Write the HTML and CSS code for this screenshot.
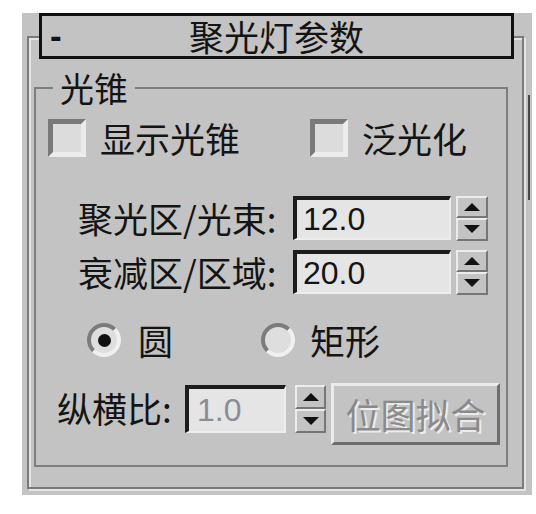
FILE: index.html
```html
<!DOCTYPE html>
<html lang="zh-CN">
<head>
  <meta charset="UTF-8" />
  <title>聚光灯参数</title>
  <link rel="stylesheet" href="styles.css">
</head>
<body>
  <div class="panel">
    <div class="rollout">
      <div class="rollout-title">
        <span class="toggle">-</span>
        <span class="title-text">聚光灯参数</span>
        <span></span>
      </div>

      <div class="group">
        <div class="legend">光锥</div>

        <div class="check-row">
          <label class="check"><span class="box"></span>显示光锥</label>
          <label class="check check-2"><span class="box"></span>泛光化</label>
        </div>

        <div class="spin-row first">
          <span class="spin-label">聚光区/光束:</span>
          <div class="field">12.0</div>
          <div class="spin-btns"><span class="up"></span><span class="down"></span></div>
        </div>
        <div class="spin-row">
          <span class="spin-label">衰减区/区域:</span>
          <div class="field">20.0</div>
          <div class="spin-btns"><span class="up"></span><span class="down"></span></div>
        </div>

        <div class="radio-row">
          <label class="radio"><span class="ring checked"></span>圆</label>
          <label class="radio radio-2"><span class="ring"></span>矩形</label>
        </div>

        <div class="aspect-row">
          <span class="aspect-label">纵横比:</span>
          <div class="field disabled">1.0</div>
          <div class="spin-btns"><span class="up"></span><span class="down"></span></div>
          <button class="fit-btn" disabled>位图拟合</button>
        </div>
      </div>
    </div>

    <div class="scroll-track"><div class="thumb"></div></div>
  </div>
</body>
</html>
```

FILE: styles.css
```css
body {
  margin: 0;
  background: #fff;
  font-family: "Noto Sans CJK SC", "Liberation Sans", sans-serif;
  color: #141414;
}

.panel {
  display: flex;
  width: 510px;
  height: 482px;
  margin: 13px 0 0 22px;
  padding: 23px 0 0 5px;
  box-sizing: border-box;
  background: #c3c3c3;
}

.rollout {
  width: 497px;
  align-self: flex-start;
  box-sizing: border-box;
  border: 2px solid #7b7b7b;
  box-shadow: inset 2px 2px 0 #e4e4e4, 2px 2px 0 #e4e4e4;
}

.rollout-title {
  display: grid;
  grid-template-columns: 40px 1fr 40px;
  align-items: center;
  height: 46px;
  margin: -25px 8px 0 10px;
  box-sizing: border-box;
  border: 3px solid #111;
  background: #c3c3c3;
  font-size: 35px;
  line-height: 40px;
}

.toggle {
  padding-left: 8px;
  font-family: "Liberation Sans", sans-serif;
  font-weight: bold;
}

.title-text {
  text-align: center;
}

.scroll-track {
  width: 8px;
}

.thumb {
  width: 2px;
  height: 105px;
  margin: 59px 0 0 4px;
  background: #4a4a4a;
}

/* group box */
.group {
  margin: 28px 14px 20px 5px;
  padding-bottom: 20px;
  border: 2px solid #7e7e7e;
}

.legend {
  width: fit-content;
  margin: -19px 0 0 17px;
  padding: 0 7px;
  background: #c3c3c3;
  font-size: 34px;
  line-height: 36px;
}

.check-row {
  display: flex;
  align-items: center;
  height: 38px;
  margin: 13px 0 0 12px;
}

.check {
  display: flex;
  align-items: center;
  gap: 14px;
  font-size: 35px;
  line-height: 38px;
}

.check-2 {
  margin-left: 70px;
}

.box {
  width: 38px;
  height: 38px;
  box-sizing: border-box;
  border: 5px solid;
  border-color: #7a7a7a #ececec #ececec #7a7a7a;
  background: #dcdcdc;
}

/* spinner rows */
.spin-row {
  display: flex;
  align-items: center;
  height: 44px;
  margin: 10px 0 0 42px;
}

.spin-row.first {
  margin-top: 39px;
}

.spin-label {
  width: 215px;
  font-size: 35px;
  line-height: 40px;
}

.field {
  width: 158px;
  height: 44px;
  box-sizing: border-box;
  padding-left: 6px;
  border-style: solid;
  border-width: 4px 2px 2px 4px;
  border-color: #1c1c1c #ededed #ededed #1c1c1c;
  background: #e5e5e5;
  font-family: "Liberation Sans", sans-serif;
  font-size: 32px;
  line-height: 38px;
}

.spin-btns {
  display: flex;
  flex-direction: column;
  width: 32px;
  height: 45px;
  margin-left: 5px;
}

.spin-btns span {
  flex: 1;
  display: flex;
  align-items: center;
  justify-content: center;
  border: 2px solid;
  border-color: #ececec #767676 #767676 #ececec;
}

.spin-btns .up::before,
.spin-btns .down::before {
  content: "";
  border-left: 8px solid transparent;
  border-right: 8px solid transparent;
}

.spin-btns .up::before {
  border-bottom: 8px solid #111;
}

.spin-btns .down::before {
  border-top: 8px solid #111;
}

/* radio buttons */
.radio-row {
  display: flex;
  align-items: center;
  height: 36px;
  margin: 28px 0 0 51px;
}

.radio {
  display: flex;
  align-items: center;
  gap: 17px;
  font-size: 35px;
  line-height: 36px;
}

.radio-2 {
  margin-left: 88px;
  gap: 15px;
}

.ring {
  display: flex;
  align-items: center;
  justify-content: center;
  width: 34px;
  height: 34px;
  box-sizing: border-box;
  border: 4px solid;
  border-color: #7c7c7c #f0f0f0 #f0f0f0 #7c7c7c;
  border-radius: 50%;
  background: #dedede;
}

.ring.checked::before {
  content: "";
  width: 13px;
  height: 13px;
  border-radius: 50%;
  background: #111;
}

/* aspect row */
.aspect-row {
  display: flex;
  align-items: flex-start;
  height: 62px;
  margin: 25px 0 0 21px;
}

.aspect-label {
  width: 128px;
  margin-top: 5px;
  font-size: 35px;
  line-height: 40px;
}

.aspect-row .field {
  width: 101px;
  height: 48px;
  margin-top: 2px;
  padding-left: 8px;
  line-height: 42px;
}

.field.disabled {
  color: #8a8c98;
}

.aspect-row .spin-btns {
  width: 31px;
  height: 48px;
  margin: 2px 0 0 9px;
}

.fit-btn {
  width: 169px;
  height: 62px;
  margin-left: 5px;
  padding: 0;
  border: 3px solid;
  border-color: #ebebeb #6e6e6e #6e6e6e #ebebeb;
  background: #c3c3c3;
  color: #8a8a8a;
  text-shadow: 2px 2px 0 #ececec;
  font-family: "Noto Sans CJK SC", sans-serif;
  font-size: 35px;
  line-height: 52px;
}
```
